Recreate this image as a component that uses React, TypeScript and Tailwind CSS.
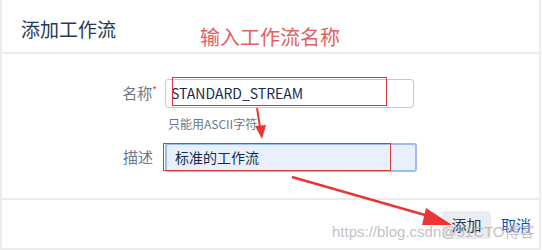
import React from 'react';

const font = { fontFamily: '"Noto Sans CJK SC", "Open Sans", sans-serif' };

export default function App() {
  return (
    <div className="relative w-[542px] h-[250px] overflow-hidden bg-white" style={font}>
      <div className="w-[541px] h-[250px] border-l-2 border-r-2 border-b-2 border-[#ececec] flex flex-col">
        {/* Header */}
        <div className="h-[54px] border-b-2 border-[#ececec] pl-[19px] pt-[15px]">
          <h1 className="text-[19px] leading-[28px] text-[#253858]">添加工作流</h1>
        </div>

        {/* Body */}
        <div className="h-[144px] pt-[25px]">
          <div className="flex items-center h-[29px]">
            <div className="w-[163px] pr-[8px] text-right text-[15px] text-[#6b778c]">
              名称<span className="text-[#de350b] text-[10px] align-top">*</span>
            </div>
            <div className="w-[249px] h-[29px] border border-[#c8c8c8] rounded-[3px] pl-[5px] flex items-center text-[14px] text-[#172b4d]">
              STANDARD_STREAM
            </div>
          </div>
          <div className="pl-[166px] mt-[8px] text-[12px] leading-[16px] text-[#6b778c]">只能用ASCII字符。</div>
          <div className="flex items-center h-[29px] mt-[11px]">
            <div className="w-[163px] pr-[12px] text-right text-[15px] text-[#6b778c]">描述</div>
            <div className="w-[252px] h-[29px] border-2 border-[#9dbcf0] rounded-[3px] bg-[#e9f0fd] pl-[8px] flex items-center text-[14px] text-[#172b4d]">
              标准的工作流
            </div>
          </div>
        </div>

        {/* Footer */}
        <div className="flex-1 border-t-2 border-[#ececec] flex items-start justify-end pt-[11px] pr-[6px] gap-[10px]">
          <button className="w-[49px] h-[28px] rounded-[3px] bg-[#ebecf0] text-[15px] text-[#253858]">添加</button>
          <button className="h-[28px] text-[15px] text-[#0052cc] pr-[2px]">取消</button>
        </div>
      </div>

      {/* Annotations */}
      <div className="absolute left-[200px] top-[24px] text-[20px] leading-[26px] text-[#e4605f]">输入工作流名称</div>
      <div className="absolute left-[172px] top-[77px] w-[215px] h-[29px] border border-[#d9363e]" />
      <div className="absolute left-[163px] top-[143px] w-[228px] h-[28px] border border-[#d9363e]" />
      <div
        className="absolute left-[332px] top-[221px] whitespace-nowrap text-[15px] leading-[22px] text-[#b4b4b4] opacity-80"
        style={{ fontFamily: '"Liberation Sans", "Noto Sans CJK SC", sans-serif' }}
      >
        https://blog.csdn@51CTO博客
      </div>
      <svg className="absolute left-0 top-0" width="542" height="250" viewBox="0 0 542 250">
        <line x1="257" y1="108" x2="260" y2="127" stroke="#ee3333" strokeWidth="2" />
        <polygon points="255,126 266,125 262,139" fill="#ee3333" />
        <line x1="292" y1="177" x2="432" y2="217" stroke="#ee3333" strokeWidth="2.5" />
        <polygon points="426,208 452,225 422,225" fill="#ee3333" />
      </svg>
    </div>
  );
}
